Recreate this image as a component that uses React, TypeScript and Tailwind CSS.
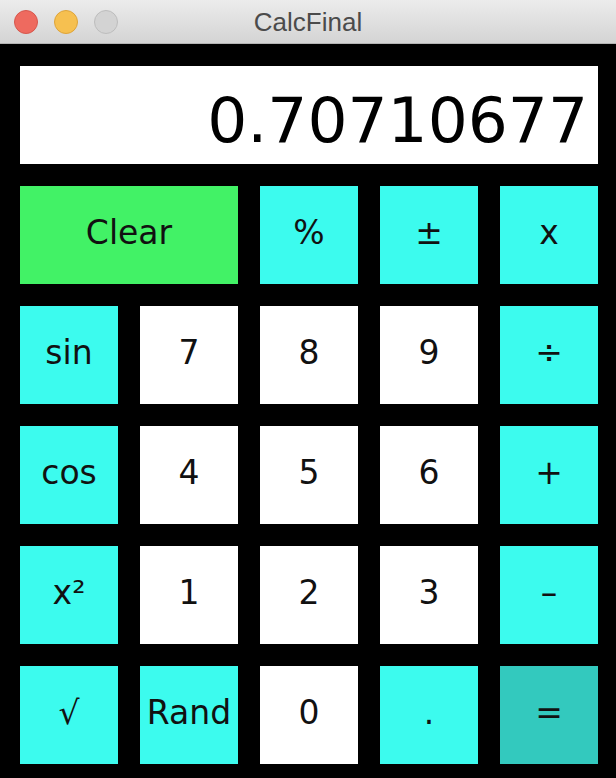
import type { ReactNode } from "react"

type Kind = "op" | "num" | "clear" | "eq"

interface Key {
  label: ReactNode
  kind: Kind
  wide?: boolean
}

const keys: Key[] = [
  { label: "Clear", kind: "clear", wide: true },
  { label: "%", kind: "op" },
  { label: "±", kind: "op" },
  { label: "x", kind: "op" },

  { label: "sin", kind: "op" },
  { label: "7", kind: "num" },
  { label: "8", kind: "num" },
  { label: "9", kind: "num" },
  { label: "÷", kind: "op" },

  { label: "cos", kind: "op" },
  { label: "4", kind: "num" },
  { label: "5", kind: "num" },
  { label: "6", kind: "num" },
  { label: "+", kind: "op" },

  { label: "x²", kind: "op" },
  { label: "1", kind: "num" },
  { label: "2", kind: "num" },
  { label: "3", kind: "num" },
  { label: "–", kind: "op" },

  { label: "√", kind: "op" },
  { label: "Rand", kind: "op" },
  { label: "0", kind: "num" },
  { label: ".", kind: "op" },
  { label: "=", kind: "eq" },
]

const kindClass: Record<Kind, string> = {
  op: "bg-[#3cfbee]",
  num: "bg-white",
  clear: "bg-[#42f266]",
  eq: "bg-[#33c9be]",
}

function TitleBar() {
  return (
    <div className="relative h-[44px] bg-gradient-to-b from-[#ececec] to-[#d4d4d4] border-b border-[#b4b4b4] flex items-center justify-center">
      {/* traffic lights */}
      <div className="absolute left-[14px] top-[10px] flex gap-[16px]">
        <span className="w-[24px] h-[24px] rounded-full bg-[#ee6a5f] border border-[#d6574d]" />
        <span className="w-[24px] h-[24px] rounded-full bg-[#f6c050] border border-[#dea43a]" />
        <span className="w-[24px] h-[24px] rounded-full bg-[#d3d3d3] border border-[#bdbdbd]" />
      </div>
      <span className="text-[26px] leading-none text-[#4b4b4b] font-['Liberation_Sans',Arial,sans-serif]">
        CalcFinal
      </span>
    </div>
  )
}

export default function App() {
  return (
    <div className="w-[616px] h-[778px] bg-black overflow-hidden font-['DejaVu_Sans',sans-serif]">
      <TitleBar />

      <div className="pl-[20px] pr-[18px] pt-[22px]">
        {/* Ekran */}
        <div className="h-[98px] bg-white flex items-center justify-end pr-[10px] pt-[10px]">
          <span className="text-[63px] leading-none text-black">0.70710677</span>
        </div>

        {/* Tuşlar */}
        <div className="grid grid-cols-5 gap-x-[22px] gap-y-[22px] mt-[22px]">
          {keys.map((k, i) => (
            <div
              key={i}
              className={`h-[98px] flex items-center justify-center text-[33px] leading-none text-[#111] pb-[6px] ${kindClass[k.kind]} ${k.wide ? "col-span-2" : ""}`}
            >
              {k.label}
            </div>
          ))}
        </div>
      </div>
    </div>
  )
}
